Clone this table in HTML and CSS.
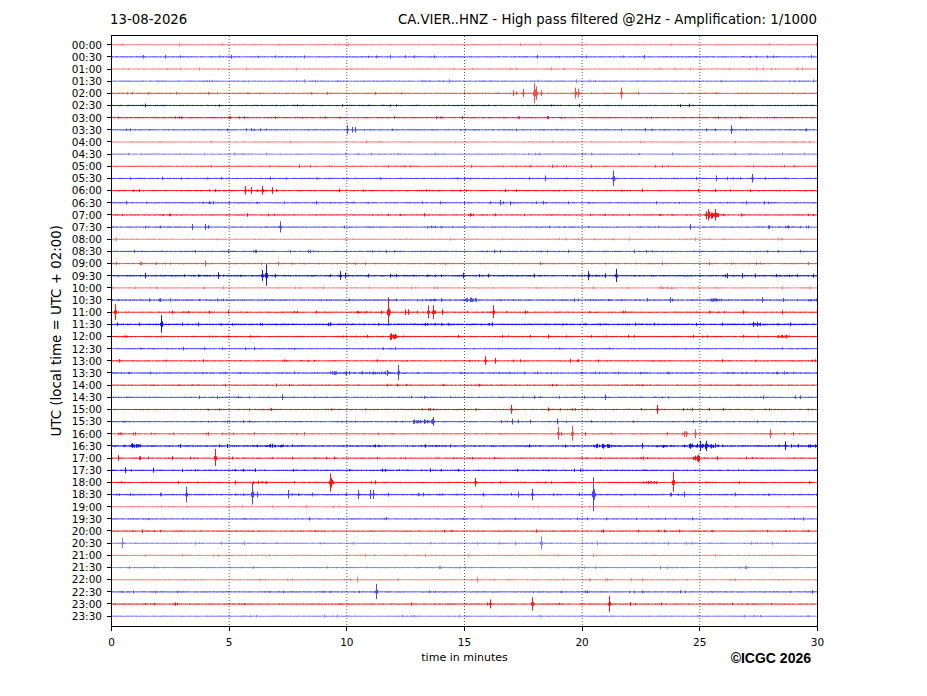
FILE: index.html
```html
<!DOCTYPE html>
<html>
<head>
<meta charset="utf-8">
<title>CA.VIER..HNZ helicorder</title>
<link rel="stylesheet" href="styles.css">
</head>
<body>
<div class="figure">
  <div class="titles">
    <span class="title-left">13-08-2026</span>
    <span class="title-right">CA.VIER..HNZ - High pass filtered @2Hz - Amplification: 1/1000</span>
  </div>
  <div class="ylabel">UTC (local time = UTC + 02:00)</div>
  <div class="yticks">
    <div class="yt">00:00</div><div class="yt">00:30</div><div class="yt">01:00</div><div class="yt">01:30</div>
    <div class="yt">02:00</div><div class="yt">02:30</div><div class="yt">03:00</div><div class="yt">03:30</div>
    <div class="yt">04:00</div><div class="yt">04:30</div><div class="yt">05:00</div><div class="yt">05:30</div>
    <div class="yt">06:00</div><div class="yt">06:30</div><div class="yt">07:00</div><div class="yt">07:30</div>
    <div class="yt">08:00</div><div class="yt">08:30</div><div class="yt">09:00</div><div class="yt">09:30</div>
    <div class="yt">10:00</div><div class="yt">10:30</div><div class="yt">11:00</div><div class="yt">11:30</div>
    <div class="yt">12:00</div><div class="yt">12:30</div><div class="yt">13:00</div><div class="yt">13:30</div>
    <div class="yt">14:00</div><div class="yt">14:30</div><div class="yt">15:00</div><div class="yt">15:30</div>
    <div class="yt">16:00</div><div class="yt">16:30</div><div class="yt">17:00</div><div class="yt">17:30</div>
    <div class="yt">18:00</div><div class="yt">18:30</div><div class="yt">19:00</div><div class="yt">19:30</div>
    <div class="yt">20:00</div><div class="yt">20:30</div><div class="yt">21:00</div><div class="yt">21:30</div>
    <div class="yt">22:00</div><div class="yt">22:30</div><div class="yt">23:00</div><div class="yt">23:30</div>
  </div>
  <div class="plot">
    <svg id="traces" class="traces" viewBox="0 0 705 590" width="705" height="590" xmlns="http://www.w3.org/2000/svg">
      <g id="rows"></g>
      <g class="grid">
        <line x1="117.2" y1="0" x2="117.2" y2="590"/>
        <line x1="234.8" y1="0" x2="234.8" y2="590"/>
        <line x1="352.5" y1="0" x2="352.5" y2="590"/>
        <line x1="470.2" y1="0" x2="470.2" y2="590"/>
        <line x1="587.8" y1="0" x2="587.8" y2="590"/>
      </g>
    </svg>
  </div>
  <div class="xticks">
    <div class="xt">0</div><div class="xt">5</div><div class="xt">10</div><div class="xt">15</div>
    <div class="xt">20</div><div class="xt">25</div><div class="xt">30</div>
  </div>
  <div class="footer">
    <div class="xlabel">time in minutes</div>
    <div class="copyright">©ICGC 2026</div>
  </div>
</div>
<script src="script.js"></script>
</body>
</html>
```

FILE: styles.css
```css
html, body {
  margin: 0;
  padding: 0;
  background: #ffffff;
}
body {
  width: 927px;
  height: 696px;
  overflow: hidden;
  font-family: "DejaVu Sans", "Liberation Sans", sans-serif;
  color: #000;
}
.figure {
  display: grid;
  grid-template-columns: 49px 16px 46px 707px;
  grid-template-rows: 35px 592px auto auto;
}
.titles {
  grid-column: 4;
  grid-row: 1;
  display: flex;
  justify-content: space-between;
  align-items: flex-start;
  padding-top: 12px;
  margin-left: -1px;
  margin-right: 1px;
  font-size: 13.3px;
  line-height: 16px;
  white-space: nowrap;
}
.ylabel {
  grid-column: 2;
  grid-row: 2;
  align-self: center;
  justify-self: start;
  writing-mode: vertical-rl;
  transform: rotate(180deg);
  font-size: 13.4px;
  line-height: 16px;
  white-space: nowrap;
}
.yticks {
  grid-column: 3;
  grid-row: 2;
  padding-top: 3.62px;
  display: flex;
  flex-direction: column;
}
.yt {
  height: 12.16px;
  line-height: 12.16px;
  font-size: 10.5px;
  text-align: right;
  padding-right: 9px;
  background: linear-gradient(#000, #000) no-repeat right center / 4px 1px;
  white-space: nowrap;
}
.plot {
  grid-column: 4;
  grid-row: 2;
  box-sizing: border-box;
  width: 707px;
  height: 592px;
  border: 1px solid #000;
  overflow: hidden;
}
.traces {
  display: block;
}
.grid line {
  stroke: #333;
  stroke-width: 0.8;
  stroke-dasharray: 1 2;
}
.xticks {
  grid-column: 4;
  grid-row: 3;
  display: flex;
  justify-content: space-between;
}
.xt {
  width: 1px;
  display: flex;
  justify-content: center;
  padding-top: 8.7px;
  font-size: 10.5px;
  line-height: 12px;
  white-space: nowrap;
  background: linear-gradient(#000, #000) no-repeat center top / 1px 4px;
}
.footer {
  grid-column: 4;
  grid-row: 4;
  display: grid;
  grid-template-columns: 1fr;
}
.xlabel {
  grid-area: 1 / 1;
  justify-self: center;
  margin-top: 3px;
  font-size: 11px;
  line-height: 13px;
}
.copyright {
  grid-area: 1 / 1;
  justify-self: end;
  margin-right: 7px;
  margin-top: 2.2px;
  font-family: "Liberation Sans", Arial, sans-serif;
  font-weight: bold;
  font-size: 14px;
  line-height: 16px;
}
```

FILE: script.js
```js
(function () {
  var NS = 'http://www.w3.org/2000/svg';
  var host = document.getElementById('rows');
  var seed = 987654321;
  function rnd() {
    seed = (seed * 1103515245 + 12345) & 0x7fffffff;
    return seed / 0x7fffffff;
  }
  var W = 705;
  var E = {
    0: [[540, 1.5]],
    1: [[165, 2], [231, 2]],
    4: [[513, 3], [516, 2], [523, 4], [534, 9, 1.2], [536, 6], [541, 3], [575, 5, 1], [578, 4], [621, 5]],
    6: [[230, 1.5], [519, 1.5]],
    7: [[130, 1.5], [347, 4], [352, 3], [355, 3], [731, 4]],
    8: [[366, 1.5]],
    9: [[234, 1.5], [345, 1.5], [435, 1.5]],
    10: [[310, 1.5], [400, 2, 2, 6], [530, 1.5]],
    11: [[545, 3], [613, 7, 1], [716, 3], [752, 4]],
    12: [[139, 1.5], [245, 4], [251, 3.5], [262, 4], [272, 3.5], [256, 2, 2, 12]],
    13: [[205, 2, 2, 6], [500, 3], [510, 3, 2, 5], [543, 2], [568, 1.5]],
    14: [[170, 1.5], [705, 4, 2, 14], [708, 5], [715, 5]],
    15: [[192, 3], [205, 3], [208, 2], [280, 5], [690, 3], [785, 3, 2, 5]],
    16: [[116, 2], [778, 2, 2, 5]],
    17: [[308, 1.5], [500, 1.5], [800, 1.5]],
    18: [[140, 1.5], [205, 3], [278, 2], [365, 1.5]],
    19: [[145, 3], [198, 1.5], [218, 3.5], [233, 1.5, 2, 10], [262, 5], [266, 10], [275, 2], [330, 1.5], [340, 4], [345, 3], [368, 2], [390, 2], [463, 3], [488, 2], [534, 2], [588, 4], [605, 2.5], [616, 6], [727, 2.5], [742, 2.5], [755, 2], [813, 2]],
    20: [[203, 1.5], [660, 2.5, 2, 13]],
    21: [[160, 2], [425, 2, 2, 18], [463, 3, 2, 14], [647, 2], [670, 3], [708, 2, 2, 14], [762, 3], [783, 2], [807, 2, 2, 10]],
    22: [[115, 7], [172, 2], [228, 2], [353, 2, 2, 17], [388, 13, 1], [405, 3], [408, 3], [428, 6], [433, 6], [442, 3], [493, 6], [525, 2], [743, 2], [782, 2]],
    23: [[117, 2], [161, 8, 1], [198, 2], [260, 1.5], [327, 3, 2, 5], [425, 1.5], [448, 1.5], [492, 2], [753, 4, 2, 7], [790, 2]],
    24: [[367, 1.5], [390, 4, 2, 7], [530, 1.5], [548, 2], [628, 1.5], [743, 1.5], [777, 2.5, 2, 13]],
    25: [[383, 1.5]],
    26: [[203, 1.5], [377, 1.5], [485, 4], [495, 3], [520, 1.5], [570, 2], [578, 1.5]],
    27: [[330, 2.5, 2, 70], [387, 3], [398, 7], [537, 1.5], [668, 1.5], [777, 1.5]],
    29: [[282, 3], [605, 3], [800, 2]],
    30: [[511, 4], [548, 2], [657, 4]],
    31: [[243, 1.5], [413, 3, 2, 20], [433, 4], [512, 3], [518, 2], [530, 2], [557, 3]],
    32: [[118, 5, 2, 5], [135, 2], [173, 1.5], [208, 2], [233, 1.5], [558, 6], [572, 7], [585, 2], [667, 2], [682, 4, 2, 6], [695, 4], [770, 4], [793, 2]],
    33: [[130, 3, 2, 12], [180, 2], [227, 2], [257, 2.5, 2, 16], [278, 2, 2, 15], [593, 3, 2, 24], [642, 3], [653, 2, 2, 20], [687, 3, 2, 33], [700, 4.5], [706, 4.5], [785, 4], [807, 3, 2, 10]],
    34: [[118, 3], [140, 2], [172, 2], [215, 8], [292, 1.5], [693, 5, 2, 7], [717, 2]],
    35: [[125, 3], [153, 2.5], [243, 1.5], [293, 1.5], [397, 2, 2, 5], [430, 2]],
    36: [[235, 2], [253, 2.5, 2, 14], [330, 8, 1.8], [375, 2], [475, 4, 1.2], [642, 2, 2, 15], [673, 9]],
    37: [[130, 1.5], [160, 2], [186, 7], [252, 10], [257, 3], [288, 4], [312, 2], [358, 4], [370, 4], [373, 4], [388, 2], [423, 2], [483, 2], [518, 3], [532, 5], [593, 15, 1], [670, 2], [684, 3], [735, 2]],
    38: [[272, 1.5]],
    39: [[383, 2.5, 2, 4], [587, 1.5]],
    40: [[638, 1.5]],
    41: [[122, 5], [541, 6], [597, 2]],
    43: [[253, 1.5]],
    44: [[292, 1.5], [357, 3], [477, 3], [642, 2]],
    45: [[376, 7]],
    46: [[490, 4], [532, 6], [609, 7], [630, 2]]
  };
  var L = 0.5, M = 0.72, F = 0.92;
  var alpha = [
    L, M, L, L, M, F, F, M, L, L,
    M, M, F, M, F, M, L, M, M, F,
    L, M, F, F, F, M, F, M, F, M,
    F, M, M, F, F, F, F, M, L, M,
    F, L, L, L, L, M, F, L
  ];
  var level = [];
  for (var k = 0; k < 48; k++) level.push(1);
  [3, 19, 21, 23, 27, 33, 37].forEach(function (r) { level[r] = 1.2; });

  for (var i = 0; i < 48; i++) {
    var y = 8.7 + i * 12.16;
    var col = (i % 2) ? '#0000ff' : '#ff0000';
    var top = new Array(W), bot = new Array(W);
    var x;
    for (x = 0; x < W; x++) {
      var a = (0.5 + 0.3 * rnd()) * level[i];
      if (rnd() < 0.015) a += 0.4 + rnd() * 0.6;
      top[x] = a * (0.65 + 0.35 * rnd());
      bot[x] = a * (0.65 + 0.35 * rnd());
    }
    var ev = (E[i] || []).slice();
    var nb = 5 + Math.floor(rnd() * 8);
    for (var b = 0; b < nb; b++) {
      ev.push([112 + rnd() * W, 1.1 + rnd() * 0.8, 0.6]);
    }
    ev.forEach(function (e) {
      var sx = Math.round(e[0] - 112);
      var big = e[1] >= 4;
      var A = e[1] * (big ? 1.15 : 1);
      var w = e[2] || 0.8;
      var dur = e[3] || 0;
      var xx, v;
      if (dur) {
        for (xx = sx; xx < sx + dur; xx++) {
          if (xx < 0 || xx >= W) continue;
          v = A * (0.25 + 0.75 * Math.pow(rnd(), 1.5));
          top[xx] = Math.max(top[xx], v * (0.5 + 0.5 * rnd()));
          bot[xx] = Math.max(bot[xx], v * (0.5 + 0.5 * rnd()));
        }
      } else {
        var n = Math.ceil(w * 4);
        for (var d = -1; d <= n; d++) {
          xx = sx + d;
          if (xx < 0 || xx >= W) continue;
          var env = d < 0 ? A * 0.25 : A * Math.exp(-d / w);
          var ft = d === 0 ? 1 : (0.6 + 0.4 * rnd());
          var fb = d === 0 ? (0.85 + 0.15 * rnd()) : (0.6 + 0.4 * rnd());
          top[xx] = Math.max(top[xx], env * ft);
          bot[xx] = Math.max(bot[xx], env * fb);
        }
      }
    });
    var dstr = '';
    for (x = 0; x < W; x++) {
      var t = Math.max(0, y - top[x]);
      var bt = Math.min(590, y + bot[x]);
      dstr += 'M' + (x + 0.5) + ' ' + t.toFixed(2) + 'V' + bt.toFixed(2);
    }
    var g = document.createElementNS(NS, 'g');
    g.setAttribute('opacity', alpha[i]);
    var p = document.createElementNS(NS, 'path');
    p.setAttribute('d', dstr);
    p.setAttribute('stroke', col);
    p.setAttribute('stroke-width', '1');
    p.setAttribute('fill', 'none');
    g.appendChild(p);
    host.appendChild(g);
  }
})();
```
